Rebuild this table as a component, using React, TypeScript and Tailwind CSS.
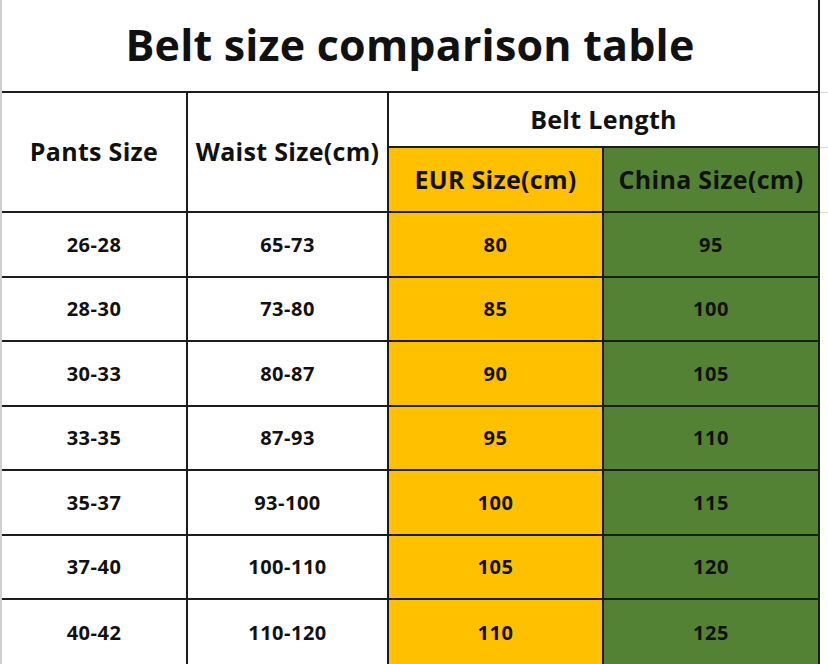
const rows = [
  { pants: "26-28", waist: "65-73", eur: "80", china: "95", h: "h-[65px]" },
  { pants: "28-30", waist: "73-80", eur: "85", china: "100", h: "h-[64px]" },
  { pants: "30-33", waist: "80-87", eur: "90", china: "105", h: "h-[65px]" },
  { pants: "33-35", waist: "87-93", eur: "95", china: "110", h: "h-[64px]" },
  { pants: "35-37", waist: "93-100", eur: "100", china: "115", h: "h-[65px]" },
  { pants: "37-40", waist: "100-110", eur: "105", china: "120", h: "h-[64px]" },
  { pants: "40-42", waist: "110-120", eur: "110", china: "125", h: "h-[68px]" },
];

const cell =
  "flex items-center justify-center border-r-2 border-b-2 border-[#1c1c1c]";
const head = "text-[25px] font-bold tracking-[0.3px]";

export default function App() {
  return (
    <div className="flex h-[664px] w-[828px] overflow-hidden bg-white font-['Open_Sans',sans-serif] text-[#111]">
      <div className="w-[820px] shrink-0 border-l-2 border-[#cfcfcf]">
        <div className={`${cell} h-[93px] text-[43px] font-bold tracking-[0.2px]`}>
          Belt size comparison table
        </div>
        <div className="grid grid-cols-[186px_201px_215px_216px] grid-rows-[55px_65px]">
          <div className={`${cell} ${head} row-span-2`}>Pants Size</div>
          <div className={`${cell} ${head} row-span-2`}>Waist Size(cm)</div>
          <div className={`${cell} ${head} col-span-2`}>Belt Length</div>
          <div className={`${cell} ${head} bg-[#ffc000]`}>EUR Size(cm)</div>
          <div className={`${cell} ${head} bg-[#548235]`}>China Size(cm)</div>
        </div>
        {rows.map((r) => (
          <div
            key={r.pants}
            className={`grid grid-cols-[186px_201px_215px_216px] ${r.h} text-[20px] font-bold tracking-[0.5px]`}
          >
            <div className={cell}>{r.pants}</div>
            <div className={cell}>{r.waist}</div>
            <div className={`${cell} bg-[#ffc000]`}>{r.eur}</div>
            <div className={`${cell} bg-[#548235]`}>{r.china}</div>
          </div>
        ))}
      </div>
      <div className="flex w-[8px] flex-col">
        <div className="h-[93px] shrink-0 border-b border-[#d9d9d9]" />
        <div className="h-[55px] shrink-0 border-b border-[#d9d9d9]" />
        <div className="h-[65px] shrink-0 border-b border-[#d9d9d9]" />
      </div>
    </div>
  );
}
